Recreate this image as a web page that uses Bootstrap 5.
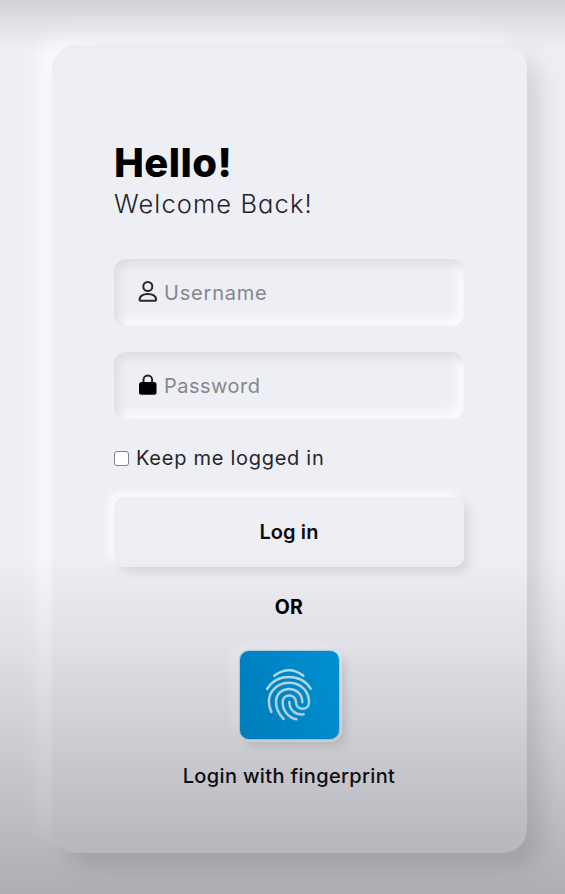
<!DOCTYPE html>
<html lang="en">
<head>
<meta charset="utf-8">
<meta name="viewport" content="width=device-width, initial-scale=1">
<title>Login</title>
<link href="https://cdn.jsdelivr.net/npm/bootstrap@5.3.0/dist/css/bootstrap.min.css" rel="stylesheet">
<style>
  body { background: #eeeff5; font-family: Inter, "Noto Sans", sans-serif; font-feature-settings: "cv11"; color: #26262b; font-size: 20px; height: 894px; overflow: hidden; }
  .shade { z-index: 10; pointer-events: none; background:
    linear-gradient(rgba(0,0,0,.12), rgba(0,0,0,.055) 22px, transparent 52px),
    linear-gradient(transparent 555px, rgba(0,0,0,.055) 640px, rgba(0,0,0,.155) 760px, rgba(0,0,0,.23) 850px, rgba(0,0,0,.27) 894px); }
  .login-panel { width: 475px; height: 808px; margin: 45px 0 0 52px; padding: 93px 63px 0 62px; border-radius: 24px; background: #eeeff5; box-shadow: 14px 14px 22px #d3d3d9, -14px -12px 18px #f8f9fe; }
  .hello { font-size: 40px; line-height: 50px; font-weight: 800; letter-spacing: .4px; color: #000; }
  .welcome { font-size: 25.5px; line-height: 32px; font-weight: 300; letter-spacing: 1.1px; color: #222228; }
  .field { height: 67px; border-radius: 12px; padding-left: 23px; box-shadow: inset 5px 6px 9px #dedfe5, inset -7px -7px 8px #f9fafe; }
  .field input { background: none; font-size: 20px; color: #333; outline: 0; width: 250px; margin-left: 5px; }
  .field input::placeholder { color: #85868c; opacity: 1; }
  .user-field { margin-top: 39px; }
  .user-field input { letter-spacing: .8px; }
  .pass-field { margin-top: 26px; }
  .pass-field input { letter-spacing: .5px; }
  .keep { margin-top: 24px; height: 30px; gap: 7px; line-height: 30px; letter-spacing: .72px; }
  .keep .form-check-input[type=checkbox] { width: 15px; height: 15px; margin: 0; border: 1.5px solid #818187; border-radius: 3px; background: #fff; }
  .login-btn { height: 70px; margin-top: 24px; border-radius: 10px; border: 0; background: #eeeff5; color: #0c0c10; font-size: 20px; font-weight: 600; letter-spacing: .1px; box-shadow: 6px 6px 9px #d9dadf, -5px -5px 7px #fafbff; }
  .or { margin-top: 25px; line-height: 30px; font-size: 19.5px; font-weight: 700; letter-spacing: .3px; color: #000; }
  .finger { width: 101px; height: 90px; margin-top: 28px; border-radius: 10px; border: 1px solid #b6dcef; background: linear-gradient(120deg, #008ace, #00a2ec); box-shadow: 0 0 0 2px #f0f0f5, 6px 6px 9px #d5d5da, -6px -6px 10px #f7f6fa; }
  .finger-label { margin-top: 21px; line-height: 30px; font-weight: 500; letter-spacing: .34px; color: #111116; }
</style>
</head>
<body>
<div class="shade position-fixed top-0 start-0 w-100 h-100"></div>
<main class="login-panel d-flex flex-column">
  <h1 class="hello mb-0"><span>Hello!</span></h1>
  <div class="welcome"><span>Welcome Back!</span></div>
  <div class="field user-field d-flex align-items-center">
    <svg width="22" height="26" viewBox="0 0 22 26" fill="none" stroke="#27272c" stroke-width="2"><circle cx="10.800" cy="6.500" r="4.500"/><path d="M3.500 20.800c-.6 0-1-.4-1-1 0-3.400 3-5.800 8.300-5.800s8.300 2.400 8.300 5.800c0 .6-.4 1-1 1z"/></svg>
    <input class="border-0 p-0" type="text" placeholder="Username">
  </div>
  <div class="field pass-field d-flex align-items-center">
    <svg width="22" height="26" viewBox="0 0 22 26"><path d="M6.500 10V6.800a4.300 4.300 0 0 1 8.600 0V10" fill="none" stroke="#222" stroke-width="2"/><rect x="2" y="9" width="17.500" height="12.800" rx="2.500" fill="#000"/></svg>
    <input class="border-0 p-0" type="password" placeholder="Password">
  </div>
  <label class="keep d-flex align-items-center"><input class="form-check-input" type="checkbox"><span>Keep me logged in</span></label>
  <button class="login-btn w-100 flex-shrink-0" type="button">Log in</button>
  <div class="or text-center">OR</div>
  <button class="finger align-self-center p-0 d-flex align-items-center justify-content-center flex-shrink-0" type="button" aria-label="Fingerprint">
    <svg width="46" height="52" viewBox="138 98 138 156" fill="none" stroke="#c4ebf8" stroke-width="7.500" stroke-linecap="round">
      <path d="M163 118Q207 86 250 118"/>
      <path d="M141 158C171 110 242 110 272 157"/>
      <path d="M154 227C131 174 168 139 207 139C246 139 267 168 267 198C267 224 230 224 228 198C227 171 188 171 188 198C188 224 205 243 229 249"/>
      <path d="M191 248C172 229 168 212 168 197C168 145 247 145 247 198"/>
      <path d="M208 197C208 221 226 237 251 234"/>
    </svg>
  </button>
  <div class="finger-label text-center">Login with fingerprint</div>
</main>
<script src="https://cdn.jsdelivr.net/npm/bootstrap@5.3.0/dist/js/bootstrap.bundle.min.js"></script>
</body>
</html>
